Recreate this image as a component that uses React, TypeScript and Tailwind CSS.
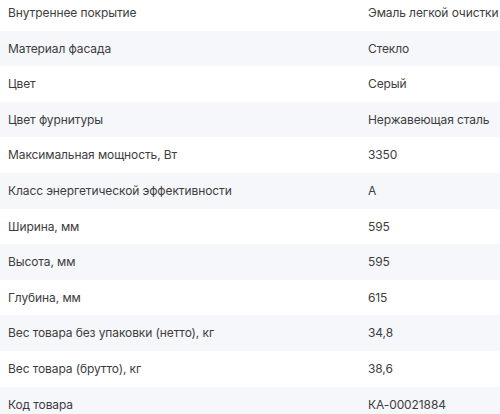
const specs: [string, string][] = [
  ['Внутреннее покрытие', 'Эмаль легкой очистки'],
  ['Материал фасада', 'Стекло'],
  ['Цвет', 'Серый'],
  ['Цвет фурнитуры', 'Нержавеющая сталь'],
  ['Максимальная мощность, Вт', '3350'],
  ['Класс энергетической эффективности', 'A'],
  ['Ширина, мм', '595'],
  ['Высота, мм', '595'],
  ['Глубина, мм', '615'],
  ['Вес товара без упаковки (нетто), кг', '34,8'],
  ['Вес товара (брутто), кг', '38,6'],
  ['Код товара', 'КА-00021884'],
];

export default function App() {
  return (
    <div className="w-[500px] h-[414px] overflow-hidden bg-white">
      <div className="-mt-[4.9px] font-['Inter',sans-serif] text-[12px] leading-[19.6px] tracking-[-0.1px] text-[#3d3d3d]">
        {specs.map(([name, value], i) => (
          <div
            key={name}
            className={`flex py-2 ${i % 2 === 1 ? 'bg-[#f6f7fb]' : 'bg-white'}`}
          >
            <div className="w-[368px] shrink-0 pl-2">{name}</div>
            <div className="whitespace-nowrap">{value}</div>
          </div>
        ))}
      </div>
    </div>
  );
}
